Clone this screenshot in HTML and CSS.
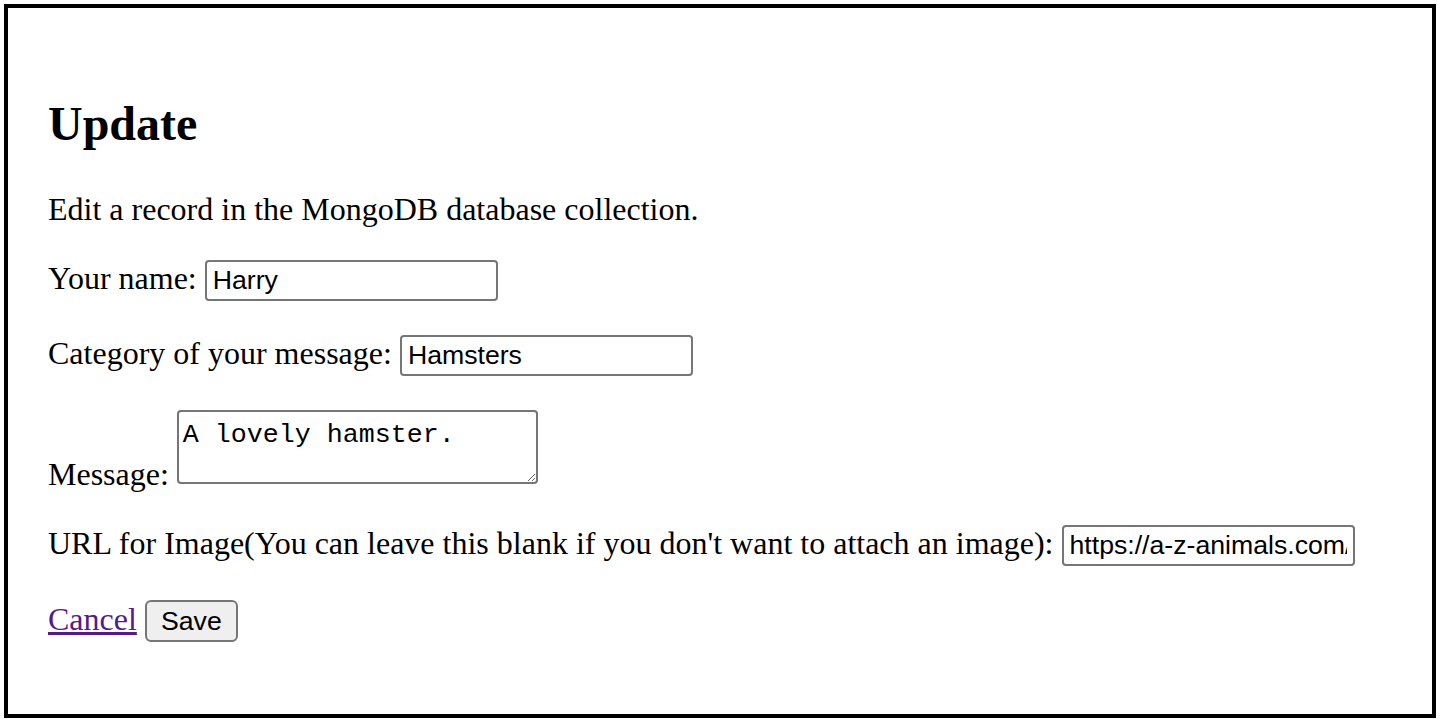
FILE: index.html
```html
<!DOCTYPE html>
<html>
<head>
<meta charset="utf-8">
<title>Update</title>
<link rel="stylesheet" href="styles.css">
</head>
<body>
<div class="box">
  <h2 class="title">Update</h2>
  <p class="row">Edit a record in the MongoDB database collection.</p>
  <form>
    <p class="row">Your name: <input class="field" type="text" value="Harry"></p>
    <p class="row">Category of your message: <input class="field" type="text" value="Hamsters"></p>
    <p class="row">Message: <textarea class="area">A lovely hamster.</textarea></p>
    <p class="row">URL for Image(You can leave this blank if you don't want to attach an image): <input class="field" type="text" value="https://a-z-animals.com/media/hamster.jpg"></p>
    <p class="row"><a class="link" href="#">Cancel</a> <button class="btn" type="button">Save</button></p>
  </form>
</div>
</body>
</html>
```
FILE: styles.css
```css
html, body {
  margin: 0;
  padding: 0;
  background: #fff;
}
body {
  font-family: "Liberation Serif", "Times New Roman", serif;
  font-size: 32px;
  color: #000;
}
.box {
  margin: 4px;
  border: 4px solid #000;
  padding: 48px 40px 40px;
  height: 714px;
  box-sizing: border-box;
}
.title {
  font-size: 48px;
  font-weight: bold;
  margin: 40px 0;
}
.row {
  margin: 32px 0;
}
form {
  margin: 0;
}
.field {
  font-family: "Liberation Sans", Arial, sans-serif;
  font-size: 26.67px;
  width: 293px;
  height: 41px;
  box-sizing: border-box;
  padding: 2px 6px;
  border: 2px solid #767676;
  border-radius: 4px;
  color: #000;
  background: #fff;
  margin: 0 0 2px;
}
.area {
  font-family: "Liberation Mono", "Courier New", monospace;
  font-size: 26.67px;
  width: 361px;
  height: 74px;
  box-sizing: border-box;
  padding: 8px 4px 2px;
  border: 2px solid #767676;
  border-radius: 4px;
  margin: 0 0 1px;
  resize: both;
  overflow: hidden;
  color: #000;
}
.link {
  color: #551a8b;
}
.btn {
  font-family: "Liberation Sans", Arial, sans-serif;
  font-size: 26.67px;
  background: #efefef;
  border: 2px solid #767676;
  border-radius: 6px;
  padding: 2px 12px;
  height: 42px;
  width: 93px;
  color: #000;
  margin: 0 0 2px;
}
```
